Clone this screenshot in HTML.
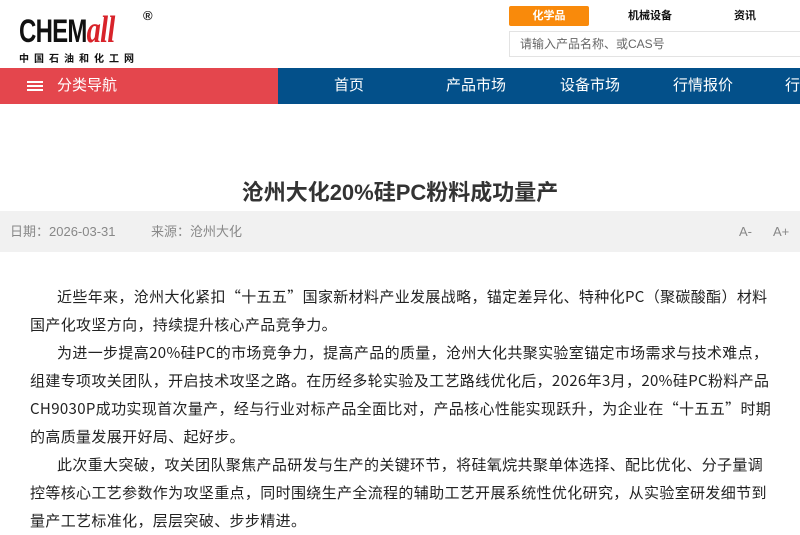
<!DOCTYPE html>
<html><head><meta charset="utf-8"><style>
*{margin:0;padding:0;box-sizing:border-box}
body{width:800px;height:533px;overflow:hidden;background:#fff;font-family:"Liberation Sans","Noto Sans CJK SC",sans-serif;color:#333;position:relative}
.abs{position:absolute}
.logo{left:19px;top:10px;font-family:"Liberation Sans",sans-serif;font-weight:bold;font-size:32px;line-height:40px;letter-spacing:-1px;transform:scaleX(.75);transform-origin:left}
.tab{top:6px;height:20px;font-size:11px;font-weight:bold;text-align:center;line-height:20px}
.nav{top:68px;height:36px;line-height:36px;font-size:15px;color:#fff}
.p div{white-space:nowrap;height:28px;line-height:28px;font-size:15px;color:#222;letter-spacing:0.35px;font-family:"Noto Sans CJK SC","Liberation Sans",sans-serif}
</style></head><body>
<div class="abs logo"><span style="color:#111">CHEM</span><span style="color:#d8232a;font-style:italic;font-family:'Liberation Serif',serif;font-size:38px">all</span></div>
<div class="abs" style="left:143px;top:8px;font-size:13px;font-weight:bold;color:#222">®</div>
<div class="abs" style="left:19px;top:50px;font-size:10px;font-weight:bold;color:#111;letter-spacing:5px">中国石油和化工网</div>
<div class="abs tab" style="left:509px;width:80px;background:#f98a0b;color:#fff;border-radius:2px">化学品</div>
<div class="abs tab" style="left:610px;width:80px;color:#111">机械设备</div>
<div class="abs tab" style="left:705px;width:80px;color:#111">资讯</div>
<div class="abs" style="left:509px;top:31px;width:300px;height:26px;border:1px solid #e3e3e3;font-size:12px;color:#666;line-height:24px;padding-left:10px">请输入产品名称、或CAS号</div>
<div class="abs nav" style="left:0;width:278px;background:#e4464d;padding-left:27px"><span style="display:inline-block;width:16px;height:10px;border-top:2px solid #fff;border-bottom:2px solid #fff;position:relative;top:0;vertical-align:middle;margin-right:14px;background:linear-gradient(#fff,#fff) center/100% 2px no-repeat"></span>分类导航</div>
<div class="abs nav" style="left:278px;width:522px;background:#03508a"></div>
<div class="abs nav" style="left:334px">首页</div>
<div class="abs nav" style="left:446px">产品市场</div>
<div class="abs nav" style="left:560px">设备市场</div>
<div class="abs nav" style="left:673px">行情报价</div>
<div class="abs nav" style="left:785px">行</div>
<div class="abs" style="left:0;width:800px;top:175px;text-align:center;font-size:22px;font-weight:bold;color:#333">沧州大化20%硅PC粉料成功量产</div>
<div class="abs" style="left:0;top:211px;width:800px;height:41px;background:#f1f1f1;font-size:13px;color:#888;line-height:41px">
<span class="abs" style="left:10px">日期：2026-03-31</span><span class="abs" style="left:151px">来源：沧州大化</span>
<span class="abs" style="left:739px">A-</span><span class="abs" style="left:773px">A+</span></div>
<div class="abs p" style="left:30px;top:283px">
<div style="padding-left:27px">近些年来，沧州大化紧扣“十五五”国家新材料产业发展战略，锚定差异化、特种化PC（聚碳酸酯）材料</div>
<div>国产化攻坚方向，持续提升核心产品竞争力。</div>
<div style="padding-left:27px">为进一步提高20%硅PC的市场竞争力，提高产品的质量，沧州大化共聚实验室锚定市场需求与技术难点，</div>
<div>组建专项攻关团队，开启技术攻坚之路。在历经多轮实验及工艺路线优化后，2026年3月，20%硅PC粉料产品</div>
<div>CH9030P成功实现首次量产，经与行业对标产品全面比对，产品核心性能实现跃升，为企业在“十五五”时期</div>
<div>的高质量发展开好局、起好步。</div>
<div style="padding-left:27px">此次重大突破，攻关团队聚焦产品研发与生产的关键环节，将硅氧烷共聚单体选择、配比优化、分子量调</div>
<div>控等核心工艺参数作为攻坚重点，同时围绕生产全流程的辅助工艺开展系统性优化研究，从实验室研发细节到</div>
<div>量产工艺标准化，层层突破、步步精进。</div>
</div>
</body></html>
